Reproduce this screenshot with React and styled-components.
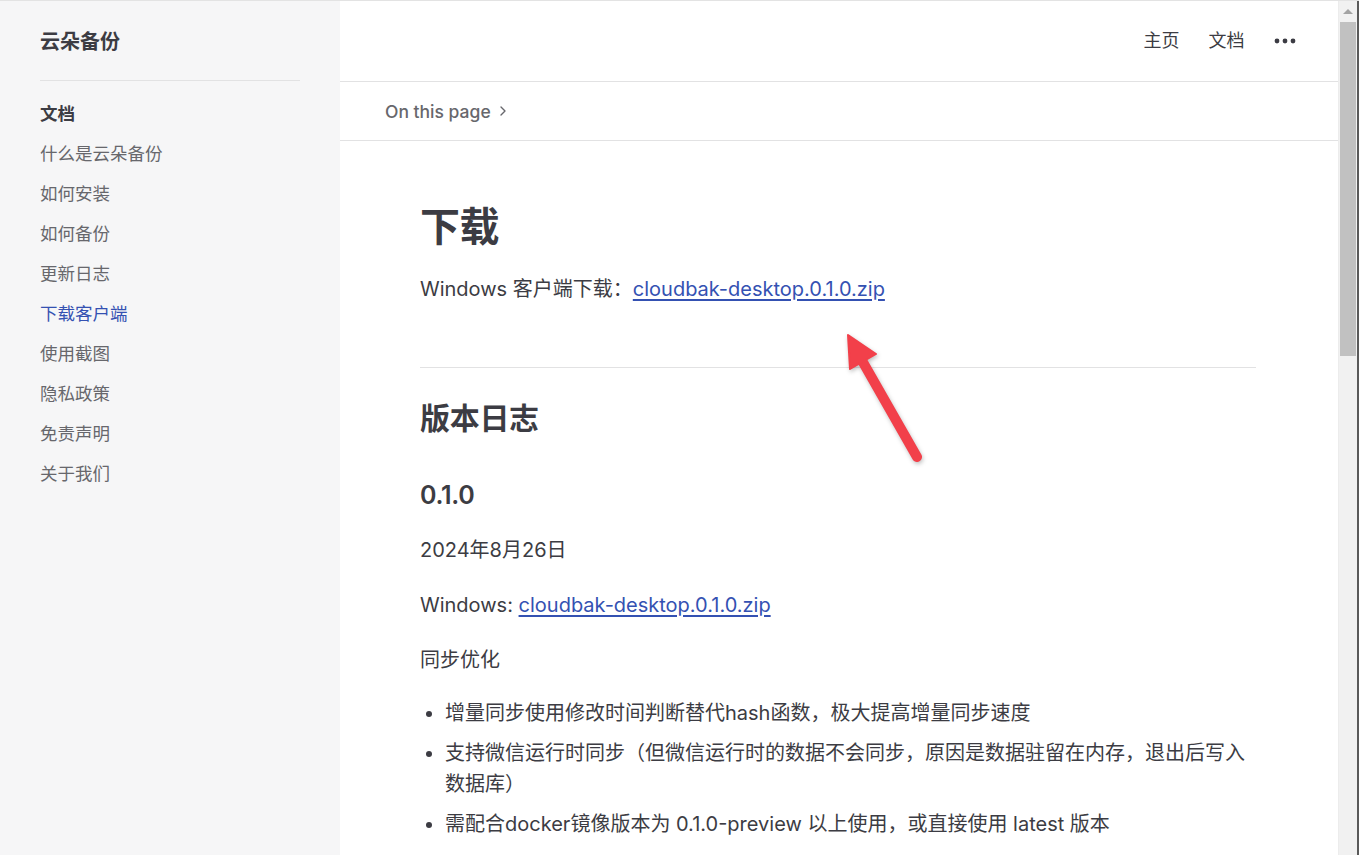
import React from "react"
import styled, { createGlobalStyle } from "styled-components"
import { ChevronRight } from "lucide-react"

const GlobalStyle = createGlobalStyle`
  html, body {
    margin: 0;
    padding: 0;
    background: #ffffff;
  }
  body {
    font-family: Inter, "Noto Sans CJK SC", sans-serif;
    color: #3c3c43;
    -webkit-font-smoothing: antialiased;
  }
  * { box-sizing: border-box; }
`

const Window = styled.div`
  display: flex;
  width: 1359px;
  height: 855px;
  overflow: hidden;
  border-top: 1px solid #e3e3e3;
`

const Sidebar = styled.aside`
  width: 340px;
  flex-shrink: 0;
  background: #f6f6f7;
  padding: 0 40px;
`

const SiteTitle = styled.div`
  height: 80px;
  display: flex;
  align-items: center;
  border-bottom: 1px solid #e2e2e3;
  font-size: 20px;
  font-weight: 700;
  color: #3c3c43;
`

const Group = styled.nav`
  padding-top: 13px;
`

const GroupTitle = styled.div`
  line-height: 40px;
  font-size: 17.5px;
  font-weight: 700;
  color: #3c3c43;
`

const SideLink = styled.a`
  display: block;
  line-height: 40px;
  font-size: 17.5px;
  color: ${p => (p.$active ? "#3451b2" : "#67676c")};
  text-decoration: none;
`

const Main = styled.div`
  position: relative;
  flex: 1;
  display: flex;
  flex-direction: column;
  background: #ffffff;
`

const TopNav = styled.header`
  height: 81px;
  flex-shrink: 0;
  display: flex;
  align-items: center;
  justify-content: flex-end;
  padding-right: 28px;
  border-bottom: 1px solid #e2e2e3;
`

const NavLink = styled.a`
  padding: 0 14.5px;
  font-size: 18px;
  line-height: 80px;
  color: #3c3c43;
  text-decoration: none;
`

const MoreButton = styled.button`
  width: 50px;
  height: 50px;
  margin-left: 1px;
  display: flex;
  align-items: center;
  justify-content: center;
  border: 0;
  background: none;
  padding: 0;
  color: #3c3c43;
`

const LocalNav = styled.div`
  height: 59px;
  flex-shrink: 0;
  display: flex;
  align-items: center;
  gap: 4px;
  padding-left: 45px;
  border-bottom: 1px solid #e2e2e3;
  font-size: 17.5px;
  font-weight: 500;
  color: #67676c;
`

const Doc = styled.main`
  padding: 61px 82px 0 80px;
  font-size: 20px;
  line-height: 35px;
  color: #3c3c43;
`

const H1 = styled.h1`
  margin: 0;
  font-size: 40px;
  line-height: 50px;
  font-weight: 700;
  letter-spacing: -0.5px;
`

const H2 = styled.h2`
  margin: 60px 0 0;
  padding-top: 30px;
  border-top: 1px solid #e2e2e3;
  font-size: 30px;
  line-height: 40px;
  font-weight: 700;
  letter-spacing: -0.3px;
`

const H3 = styled.h3`
  margin: 40px 0 0;
  font-size: 25px;
  line-height: 35px;
  font-weight: 600;
  letter-spacing: -0.3px;
`

const P = styled.p`
  margin: 20px 0 0;
`

const DocLink = styled.a`
  color: #3451b2;
  font-weight: 400;
  text-decoration: underline;
  text-underline-offset: 3px;
  text-decoration-thickness: 1.5px;
`

const List = styled.ul`
  margin: 20px 0 0;
  padding-left: 25px;
`

const Item = styled.li`
  line-height: 31px;
  & + & {
    margin-top: 9px;
  }
`

const Annotation = styled.svg`
  position: absolute;
  left: 500px;
  top: 324px;
  filter: drop-shadow(1px 2px 2px rgba(0, 0, 0, 0.25));
`

const Scrollbar = styled.div`
  width: 21px;
  flex-shrink: 0;
  display: flex;
  flex-direction: column;
  background: #f1f1f1;
  border-left: 1px solid #ececec;
  border-right: 2px solid #5a5a5a;
`

const ScrollButton = styled.div`
  height: 21px;
  display: flex;
  align-items: center;
  justify-content: center;
  &::before {
    content: "";
    border-left: 5px solid transparent;
    border-right: 5px solid transparent;
    border-bottom: 5px solid #a3a3a3;
  }
`

const Thumb = styled.div`
  height: 334px;
  margin: 0 1px;
  background: #c1c1c1;
`

const sideItems = [
  "什么是云朵备份",
  "如何安装",
  "如何备份",
  "更新日志",
  "下载客户端",
  "使用截图",
  "隐私政策",
  "免责声明",
  "关于我们",
]

export default function App() {
  return (
    <>
      <GlobalStyle />
      <Window>
        <Sidebar>
          <SiteTitle>云朵备份</SiteTitle>
          <Group>
            <GroupTitle>文档</GroupTitle>
            {sideItems.map(item => (
              <SideLink key={item} $active={item === "下载客户端"}>
                {item}
              </SideLink>
            ))}
          </Group>
        </Sidebar>

        <Main>
          <TopNav>
            <NavLink>主页</NavLink>
            <NavLink>文档</NavLink>
            <MoreButton aria-label="more">
              <svg width="22" height="6" viewBox="0 0 22 6">
                <circle cx="3" cy="3" r="2.4" fill="currentColor" />
                <circle cx="11" cy="3" r="2.4" fill="currentColor" />
                <circle cx="19" cy="3" r="2.4" fill="currentColor" />
              </svg>
            </MoreButton>
          </TopNav>

          <LocalNav>
            On this page
            <ChevronRight size={16} strokeWidth={2} />
          </LocalNav>

          <Doc>
            <H1>下载</H1>
            <P>
              Windows 客户端下载：<DocLink>cloudbak-desktop.0.1.0.zip</DocLink>
            </P>

            <H2>版本日志</H2>
            <H3>0.1.0</H3>
            <P>2024年8月26日</P>
            <P>
              Windows: <DocLink>cloudbak-desktop.0.1.0.zip</DocLink>
            </P>
            <P>同步优化</P>
            <List>
              <Item>增量同步使用修改时间判断替代hash函数，极大提高增量同步速度</Item>
              <Item>
                支持微信运行时同步（但微信运行时的数据不会同步，原因是数据驻留在内存，退出后写入数据库）
              </Item>
              <Item>需配合docker镜像版本为 0.1.0-preview 以上使用，或直接使用 latest 版本</Item>
            </List>
          </Doc>

          <Annotation width="90" height="145" viewBox="0 0 90 145">
            <line x1="20" y1="32" x2="77" y2="132" stroke="#f2404a" strokeWidth="10" strokeLinecap="round" />
            <polygon points="8,10 36,29 10,44" fill="#f2404a" stroke="#f2404a" strokeWidth="2" strokeLinejoin="round" />
          </Annotation>
        </Main>

        <Scrollbar>
          <ScrollButton />
          <Thumb />
        </Scrollbar>
      </Window>
    </>
  )
}
